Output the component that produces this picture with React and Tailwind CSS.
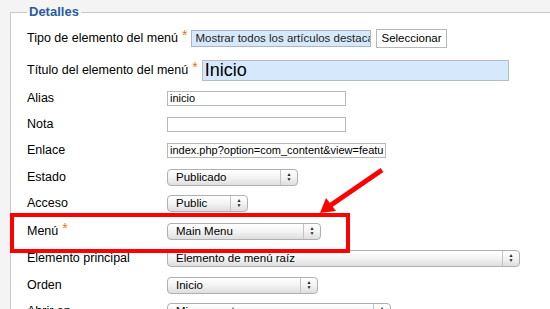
const font = { fontFamily: '"Liberation Sans", Arial, sans-serif' };

function Star() {
  return <span className="ml-[4px] text-[#e8741e] text-[14px] leading-none relative -top-[3px]">*</span>;
}

function TextBox({ value, width }) {
  return (
    <div
      className={`h-[15px] border border-[#b8b8b8] bg-white px-[2px] text-[11px] leading-[13px] text-black overflow-hidden whitespace-nowrap ${width}`}
    >
      {value}
    </div>
  );
}

function Select({ value, width }) {
  return (
    <div
      className={`h-[17px] flex items-stretch rounded-[4px] border border-[#b0b0b0] bg-gradient-to-b from-white via-[#f3f3f3] to-[#dedede] text-[11.5px] text-black overflow-hidden ${width}`}
    >
      <div className="flex-1 pl-[8px] leading-[15px] whitespace-nowrap overflow-hidden">{value}</div>
      <div className="w-[17px] border-l border-[#c4c4c4] flex flex-col items-center justify-center text-[5px] leading-[5px] text-[#222]">
        <span>▲</span>
        <span>▼</span>
      </div>
    </div>
  );
}

function Row({ label, star, children, className = "" }) {
  return (
    <div className={`h-[26px] flex items-center ${className}`}>
      <div className="w-[140px] text-[12.5px] text-black flex items-center">
        {label}
        {star && <Star />}
      </div>
      {children}
    </div>
  );
}

export default function App() {
  return (
    <div className="relative w-[550px] h-[309px] overflow-hidden bg-[#f4f4f4]" style={font}>
      <fieldset className="ml-[10px] mt-[4px] w-[600px] h-[400px] border-t border-l border-[#c9c9c9] bg-white pl-[16px] pt-[5px]">
        <legend className="px-[2px] text-[13px] leading-4 font-bold text-[#2b5c9e]">Detalles</legend>

        {/* Tipo de elemento */}
        <div className="h-[26px] flex items-center text-[12.5px] text-black">
          Tipo de elemento del menú
          <Star />
          <div className="ml-[4px] w-[180px] h-[17px] border border-[#a9b6c4] bg-[#d6e9fc] px-[3px] text-[11.5px] leading-[15px] whitespace-nowrap overflow-hidden text-[#222]">
            Mostrar todos los artículos destacad
          </div>
          <button className="ml-[5px] h-[19px] px-[4px] border border-[#b8b8b8] bg-white text-[11.5px] leading-[17px] text-black">
            Seleccionar
          </button>
        </div>

        {/* Titulo */}
        <div className="mt-[6px] h-[26px] flex items-center text-[12.5px] text-black">
          Título del elemento del menú
          <Star />
          <div className="ml-[4px] w-[307px] h-[21px] border border-[#b4bcc6] bg-[#d6e9fc] px-[2px] text-[18px] leading-[19px] text-black">
            Inicio
          </div>
        </div>

        <Row label="Alias" className="mt-[2px]">
          <TextBox value="inicio" width="w-[179px]" />
        </Row>
        <Row label="Nota">
          <TextBox value="" width="w-[179px]" />
        </Row>
        <Row label="Enlace">
          <TextBox value="index.php?option=com_content&view=featu" width="w-[219px]" />
        </Row>
        <Row label="Estado" className="mt-[1px]">
          <Select value="Publicado" width="w-[131px]" />
        </Row>
        <Row label="Acceso">
          <Select value="Public" width="w-[81px]" />
        </Row>
        <Row label="Menú" star className="mt-[2px]">
          <Select value="Main Menu" width="w-[154px]" />
        </Row>
        <Row label="Elemento principal" className="mt-[1px]">
          <Select value="Elemento de menú raíz" width="w-[353px]" />
        </Row>
        <Row label="Orden" className="mt-[1px]">
          <Select value="Inicio" width="w-[151px]" />
        </Row>
        <Row label="Abrir en">
          <Select value="Misma ventana" width="w-[224px]" />
        </Row>
      </fieldset>

      {/* annotation: red box */}
      <div className="absolute left-[10px] top-[213px] w-[340px] h-[40px] border-[4px] border-[#ff0000]" />

      {/* annotation: arrow */}
      <svg className="absolute left-0 top-0" width="550" height="309" viewBox="0 0 550 309">
        <line x1="382" y1="170" x2="331" y2="205" stroke="#ff0000" strokeWidth="5" strokeLinecap="butt" />
        <polygon points="320,213 326,198 336,211" fill="#ff0000" />
      </svg>
    </div>
  );
}
